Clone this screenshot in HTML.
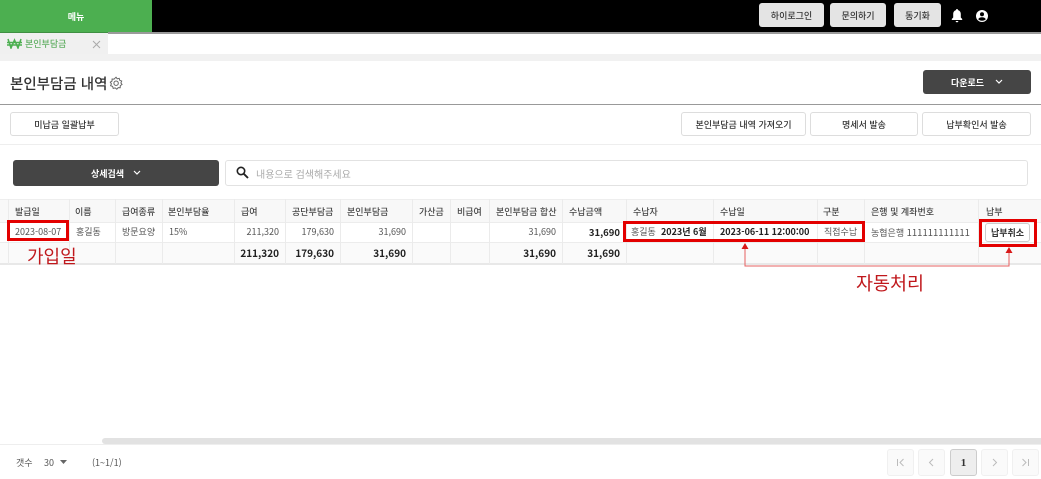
<!DOCTYPE html>
<html lang="ko"><head><meta charset="utf-8"><title>본인부담금 내역</title>
<style>
html,body{margin:0;padding:0;background:#fff}
#p{position:relative;width:1041px;height:479px;overflow:hidden;background:#fff;font-family:"Noto Sans CJK KR","Liberation Sans",sans-serif;color:#333;font-size:9px}
#p div{position:absolute;box-sizing:border-box}
.c{display:flex;align-items:center;justify-content:center;white-space:nowrap}
.btn{background:#fff;border:1px solid #ddd;border-radius:3px;font-size:9px;color:#333;height:24px;top:112px;font-weight:500}
.top{background:#e4e4e4;border-radius:3px;top:3px;height:24px;font-size:9px;color:#333;font-weight:500}
.dark{background:#454545;color:#fff;border-radius:3px;font-size:9px;font-weight:700}
.t{white-space:nowrap;line-height:14px}
.h{top:205px;font-size:9px;color:#444;font-weight:500}
.r1{top:225px;font-size:9px;color:#555;height:14px}
.r2{top:246px;font-size:10px;font-weight:700;color:#222}
.b{font-weight:700;color:#222}
.rt{text-align:right}
.v{width:1px;top:199px;height:65px;background:#ebebeb}
.red{border:3px solid #e30000}
.pg{top:449px;width:27px;height:27px;border:1px solid #f0f0f0;border-radius:3px;background:#fafafa;color:#bbb}
</style></head><body><div id="p">
<!-- top bar -->
<div style="left:0;top:0;width:1041px;height:32px;background:#000"></div>
<div class="c" style="left:0;top:0;width:152px;height:32px;background:#4caf50;color:#fff;font-size:9px;font-weight:700">메뉴</div>
<div class="c top" style="left:759px;width:65px">하이로그인</div>
<div class="c top" style="left:830px;width:56px">문의하기</div>
<div class="c top" style="left:894px;width:47px">동기화</div>
<svg style="position:absolute;left:950px;top:8px" width="14" height="15" viewBox="0 0 14 15"><path d="M7 1C6.300 1 6 1.500 6 2.100C4.200 2.600 3.200 4.100 3.200 6V9.500L1.800 11V12H12.200V11L10.800 9.500V6C10.800 4.100 9.800 2.600 8 2.100C8 1.500 7.700 1 7 1ZM5.600 13C5.700 13.800 6.300 14.300 7 14.300S8.300 13.800 8.400 13Z" fill="#fff"/></svg>
<svg style="position:absolute;left:975px;top:9px" width="14" height="14" viewBox="0 0 14 14"><circle cx="7" cy="7" r="6" fill="#fff"/><circle cx="7" cy="5.200" r="2" fill="#000"/><path d="M3.200 10.200C4 8.800 5.500 8.300 7 8.300S10 8.800 10.800 10.200C9.800 11.200 8.500 11.700 7 11.700S4.200 11.200 3.200 10.200Z" fill="#000"/></svg>
<!-- tab row -->
<div style="left:0;top:32px;width:1041px;height:2px;background:#9a9a9a"></div>
<div style="left:0;top:33px;width:108px;height:21px;background:#f0f0f0"></div>
<div style="left:0;top:32px;width:108px;height:1px;background:#3f8f42"></div>
<div style="left:0;top:54px;width:1041px;height:7px;background:#f1f1f1"></div>
<svg style="position:absolute;left:7px;top:38px" width="15" height="11" viewBox="0 0 15 11"><path d="M1 1L4 10L7.500 2L11 10L14 1M0 4.500H15M0 7H15" fill="none" stroke="#4caf50" stroke-width="1.500"/></svg>
<div class="t" style="left:25px;top:37px;color:#5fae62;font-size:9px;font-weight:500">본인부담금</div>
<svg style="position:absolute;left:92px;top:40px" width="9" height="9" viewBox="0 0 9 9"><path d="M1 1L8 8M8 1L1 8" stroke="#aaa" stroke-width="1" fill="none"/></svg>
<!-- title -->
<div class="t" style="left:10px;top:74px;font-size:14.500px;line-height:20px;color:#333;font-weight:500">본인부담금 내역</div>
<svg style="position:absolute;left:109px;top:76px" width="14" height="15" viewBox="0 0 14 15"><path d="M7 1.200L8.200 2.800L10.200 2.300L10.700 4.300L12.700 5L11.900 6.900L13 8.500L11.300 9.600L11.200 11.700L9.200 11.600L7.800 13.200L6.200 11.900L4.200 12.400L3.600 10.400L1.600 9.700L2.400 7.800L1.300 6.200L3 5.100L3.100 3L5.100 3.100Z" fill="none" stroke="#666" stroke-width="1"/><circle cx="7.100" cy="7.200" r="2.200" fill="none" stroke="#666" stroke-width="1"/></svg>
<div class="c dark" style="left:923px;top:70px;width:108px;height:24px">다운로드<svg style="margin-left:11px" width="8" height="6" viewBox="0 0 8 6"><path d="M1 1L4 4L7 1" stroke="#fff" stroke-width="1.200" fill="none"/></svg></div>
<div style="left:0;top:104px;width:1041px;height:1px;background:#999"></div>
<div class="c btn" style="left:10px;width:109px">미납금 일괄납부</div>
<div class="c btn" style="left:681px;width:125px">본인부담금 내역 가져오기</div>
<div class="c btn" style="left:810px;width:108px">명세서 발송</div>
<div class="c btn" style="left:922px;width:109px">납부확인서 발송</div>
<div style="left:0;top:144px;width:1041px;height:1px;background:#eee"></div>
<!-- search -->
<div class="c dark" style="left:13px;top:160px;width:206px;height:26px">상세검색<svg style="margin-left:9px" width="8" height="6" viewBox="0 0 8 6"><path d="M1 1L4 4L7 1" stroke="#fff" stroke-width="1.200" fill="none"/></svg></div>
<div style="left:225px;top:160px;width:803px;height:26px;border:1px solid #e2e2e2;border-radius:3px;background:#fff"></div>
<svg style="position:absolute;left:236px;top:166px" width="13" height="13" viewBox="0 0 13 13"><circle cx="5" cy="5" r="3.700" fill="none" stroke="#222" stroke-width="1.600"/><path d="M7.800 7.800L12 12" stroke="#222" stroke-width="1.900"/></svg>
<div class="t" style="left:256px;top:167px;font-size:10px;color:#aaa">내용으로 검색해주세요</div>
<div style="left:0;top:199px;width:1041px;height:65px;background:#fff"></div>
<div style="left:0;top:199px;width:1041px;height:23px;background:#f8f8f8"></div>
<div style="left:0;top:242px;width:1041px;height:22px;background:#fafafa"></div>
<div style="left:0;top:199px;width:1041px;height:1px;background:#eee"></div>
<div style="left:0;top:222px;width:1041px;height:1px;background:#ececec"></div>
<div style="left:0;top:242px;width:1041px;height:1px;background:#ececec"></div>
<div style="left:0;top:263px;width:1041px;height:2px;background:#e8e8e8"></div>
<div class="v" style="left:8px"></div><div class="v" style="left:69px"></div><div class="v" style="left:115px"></div><div class="v" style="left:162px"></div><div class="v" style="left:234px"></div><div class="v" style="left:285px"></div><div class="v" style="left:340px"></div><div class="v" style="left:412px"></div><div class="v" style="left:450px"></div><div class="v" style="left:489px"></div><div class="v" style="left:562px"></div><div class="v" style="left:626px"></div><div class="v" style="left:713px"></div><div class="v" style="left:817px"></div><div class="v" style="left:864px"></div><div class="v" style="left:978px"></div>
<!-- header -->
<div class="t h" style="left:15px">발급일</div><div class="t h" style="left:75px">이름</div><div class="t h" style="left:122px">급여종류</div><div class="t h" style="left:168px">본인부담율</div><div class="t h" style="left:241px">급여</div><div class="t h" style="left:292px">공단부담금</div><div class="t h" style="left:347px">본인부담금</div><div class="t h" style="left:419px">가산금</div><div class="t h" style="left:457px">비급여</div><div class="t h" style="left:496px">본인부담금 합산</div><div class="t h" style="left:569px">수납금액</div><div class="t h" style="left:633px">수납자</div><div class="t h" style="left:720px">수납일</div><div class="t h" style="left:823px">구분</div><div class="t h" style="left:871px">은행 및 계좌번호</div><div class="t h" style="left:986px">납부</div>
<!-- row -->
<div class="t r1" style="left:15px">2023-08-07</div><div class="t r1" style="left:76px">홍길동</div><div class="t r1" style="left:122px">방문요양</div><div class="t r1" style="left:169px">15%</div>
<div class="t r1 rt" style="left:234px;width:45px">211,320</div><div class="t r1 rt" style="left:285px;width:49px">179,630</div><div class="t r1 rt" style="left:340px;width:66px">31,690</div><div class="t r1 rt" style="left:489px;width:67px">31,690</div><div class="t r1 rt b" style="left:562px;width:58px;font-size:9.500px">31,690</div>
<div class="t r1" style="left:631px">홍길동</div><div class="t r1 b" style="left:661px">2023년 6월</div><div class="t r1 b" style="left:720px">2023-06-11 12:00:00</div><div class="t r1" style="left:824px">직접수납</div><div class="t r1" style="left:871px">농협은행 <span style="font-size:9.500px">111111111111</span></div>
<div class="c" style="left:985px;top:223px;width:45px;height:19px;background:#fff;border:1px solid #ccc;border-radius:3px;font-size:9px;color:#333;font-weight:700">납부취소</div>
<!-- total -->
<div class="t r2 rt" style="left:234px;width:45px">211,320</div><div class="t r2 rt" style="left:285px;width:49px">179,630</div><div class="t r2 rt" style="left:340px;width:66px">31,690</div><div class="t r2 rt" style="left:489px;width:67px">31,690</div><div class="t r2 rt" style="left:562px;width:58px">31,690</div>
<!-- annotations -->
<div class="red" style="left:7px;top:220px;width:62px;height:21px"></div>
<div class="red" style="left:623px;top:221px;width:242px;height:21px"></div>
<div class="red" style="left:979px;top:219px;width:58px;height:28px"></div>
<div class="t" style="left:27px;top:245px;font-size:18px;line-height:22px;color:#c0181c">가입일</div>
<div class="t" style="left:856px;top:272px;font-size:18.500px;line-height:22px;color:#c0181c">자동처리</div>
<svg style="position:absolute;left:738px;top:240px" width="280" height="28" viewBox="0 0 280 28"><path d="M7 8V26H271V11" fill="none" stroke="#e56060" stroke-width="1"/><path d="M7 3L3.500 9H10.500Z M271 7L267.500 13H274.500Z" fill="#d81818"/></svg>
<!-- footer -->
<div style="left:102px;top:438px;width:939px;height:6px;background:#e2e2e2;border-radius:3px 0 0 3px"></div>
<div style="left:0;top:444px;width:1041px;height:1px;background:#eee"></div>
<div class="t" style="left:16px;top:456px;color:#555">갯수</div>
<div class="t" style="left:44px;top:456px;color:#555">30</div>
<svg style="position:absolute;left:60px;top:460px" width="7" height="4" viewBox="0 0 7 4"><path d="M0 0H7L3.500 4Z" fill="#666"/></svg>
<div class="t" style="left:92px;top:456px;color:#555">(1~1/1)</div>
<div class="c pg" style="left:887px"><svg width="9" height="9" viewBox="0 0 9 9"><path d="M1.500 1V8M7.500 1L4 4.500L7.500 8" fill="none" stroke="#bbb"/></svg></div>
<div class="c pg" style="left:918px"><svg width="9" height="9" viewBox="0 0 9 9"><path d="M6 1L2.500 4.500L6 8" fill="none" stroke="#bbb"/></svg></div>
<div class="c pg" style="left:950px;background:#eee;border-color:#ccc;color:#333;font-family:'Liberation Serif',serif;font-size:11px;font-weight:700">1</div>
<div class="c pg" style="left:981px"><svg width="9" height="9" viewBox="0 0 9 9"><path d="M3 1L6.500 4.500L3 8" fill="none" stroke="#bbb"/></svg></div>
<div class="c pg" style="left:1012px"><svg width="9" height="9" viewBox="0 0 9 9"><path d="M1.500 1L5 4.500L1.500 8M7.500 1V8" fill="none" stroke="#bbb"/></svg></div>
</div></body></html>
